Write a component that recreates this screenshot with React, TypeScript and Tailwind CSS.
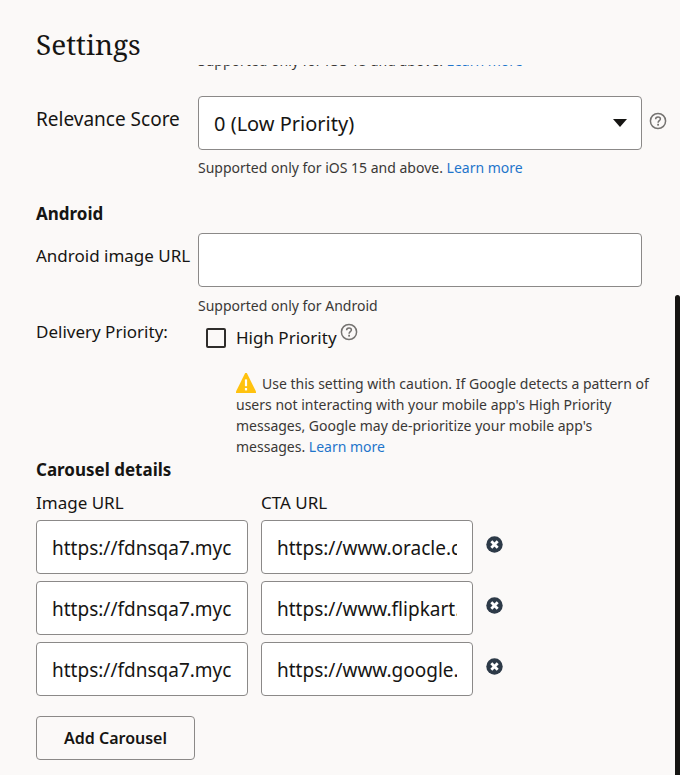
import React, { useState } from 'react';

interface CarouselItem {
  id: number;
  image: string;
  cta: string;
}

const initialItems: CarouselItem[] = [
  { id: 1, image: 'https://fdnsqa7.mycdn.com/images/1.png', cta: 'https://www.oracle.com' },
  { id: 2, image: 'https://fdnsqa7.mycdn.com/images/2.png', cta: 'https://www.flipkart.com' },
  { id: 3, image: 'https://fdnsqa7.mycdn.com/images/3.png', cta: 'https://www.google.com' },
];

const fieldClass = 'block w-full h-[54px] px-[15px] pt-[1px] bg-white border border-[#8b8988] rounded-[4px] text-[#161513] outline-none focus:border-[#227e9e]';
const hintClass = 'text-[14px] leading-[21px] text-[#3a3836]';
const linkClass = 'text-[#1f75cb] hover:underline';

const HelpIcon = () => (
  <svg width="18" height="18" viewBox="0 0 18 18" fill="none" aria-hidden="true">
    <circle cx="9" cy="9" r="7.6" stroke="#757371" strokeWidth="1.5" />
    <path d="M6.6 7.3C6.6 5.8 7.6 4.9 9 4.9s2.4.9 2.4 2.1c0 1.6-2.3 1.8-2.3 3.7" stroke="#757371" strokeWidth="1.5" />
    <rect x="8.2" y="11.8" width="1.8" height="1.8" fill="#757371" />
  </svg>
);

const WarningIcon = () => (
  <svg width="20" height="20" viewBox="0 0 20 20" className="inline-block mr-[6px] align-text-bottom" aria-hidden="true">
    <path d="M9.2 0h1.6L20 18.5V20H0v-1.5Z" fill="#ffc20e" />
    <path d="M10 6.4v6.8" stroke="#fff" strokeWidth="2.2" />
    <path d="M10 15v2.4" stroke="#fff" strokeWidth="2.2" />
  </svg>
);

const RemoveIcon = () => (
  <svg width="17" height="17" viewBox="0 0 17 17" aria-hidden="true">
    <circle cx="8.5" cy="8.5" r="8.2" fill="#2d3a48" />
    <path d="m5.3 5.3 6.4 6.4m0-6.4-6.4 6.4" stroke="#fff" strokeWidth="2.8" />
  </svg>
);

const App: React.FC = () => {
  const [score, setScore] = useState('0');
  const [androidImage, setAndroidImage] = useState('');
  const [highPriority, setHighPriority] = useState(false);
  const [items, setItems] = useState<CarouselItem[]>(initialItems);

  const updateItem = (id: number, patch: Partial<CarouselItem>) => {
    setItems(items.map(item => (item.id === id ? { ...item, ...patch } : item)));
  };

  const addItem = () => {
    setItems([...items, { id: Date.now(), image: '', cta: '' }]);
  };

  return (
    <div className="flex min-h-screen bg-[#fbf9f8] text-[#161513] font-['Noto_Sans','Open_Sans',sans-serif]">
      <main className="flex-1 min-w-0 pl-9 pr-2 pb-[15px]">
        <h1 className="pt-6 pb-[1px] text-[28px] leading-10 font-['Noto_Serif','Liberation_Serif',serif]">Settings</h1>

        {/* row scrolled under the heading */}
        <div className="flex items-end h-[6px] ml-[162px] overflow-hidden">
          <p className={hintClass}>
            Supported only for iOS 15 and above. <a href="#" className={linkClass}>Learn more</a>
          </p>
        </div>

        <div className="grid grid-cols-[162px_1fr_25px] mt-[25px]">
          <label htmlFor="score" className="pt-2 text-[19px] leading-[30px]">Relevance Score</label>
          <div className="relative">
            <select
              id="score"
              value={score}
              onChange={e => setScore(e.target.value)}
              className={`${fieldClass} text-[20px] appearance-none`}
            >
              <option value="0">0 (Low Priority)</option>
              <option value="0.5">0.5 (Medium Priority)</option>
              <option value="1">1 (High Priority)</option>
            </select>
            <svg width="14" height="8" viewBox="0 0 14 8" className="absolute right-[15px] top-[23px] pointer-events-none" aria-hidden="true">
              <path d="M0 0h14L7 8Z" fill="#161513" />
            </svg>
          </div>
          <button type="button" aria-label="Relevance score help" className="self-start mt-4 ml-[7px]">
            <HelpIcon />
          </button>
          <p className={`${hintClass} col-start-2 mt-[7px]`}>
            Supported only for iOS 15 and above. <a href="#" className={linkClass}>Learn more</a>
          </p>
        </div>

        <h2 className="mt-6 text-[17px] leading-6 font-bold">Android</h2>

        <div className="grid grid-cols-[162px_1fr_25px] mt-[7px]">
          <label htmlFor="android-image" className="pt-2 text-[17px] leading-[30px]">Android image URL</label>
          <input
            id="android-image"
            type="text"
            value={androidImage}
            onChange={e => setAndroidImage(e.target.value)}
            className={`${fieldClass} text-[19px]`}
          />
          <p className={`${hintClass} col-start-2 mt-2`}>Supported only for Android</p>
        </div>

        <div className="flex mt-1">
          <span className="w-[162px] shrink-0 text-[17px] leading-6">Delivery Priority:</span>
          <div className="flex-1 min-w-0 pl-2">
            <div className="flex items-start">
              <label className="flex items-center gap-[10px] mt-2 text-[17px] leading-5">
                <input
                  type="checkbox"
                  checked={highPriority}
                  onChange={e => setHighPriority(e.target.checked)}
                  className="appearance-none w-5 h-5 border-2 border-[#2f2d2b] rounded-[2px] checked:bg-[#2f2d2b]"
                />
                High Priority
              </label>
              <button type="button" aria-label="High priority help" className="mt-[3px] ml-[3px]">
                <HelpIcon />
              </button>
            </div>
            <p className={`${hintClass} mt-[25px] pl-[30px] pr-1`}>
              <WarningIcon />
              Use this setting with caution. If Google detects a pattern of users not interacting with your mobile app's High Priority messages, Google may de-prioritize your mobile app's messages. <a href="#" className={linkClass}>Learn more</a>
            </p>
          </div>
        </div>

        <h2 className="mt-[1px] text-[17px] leading-6 font-bold">Carousel details</h2>

        <div className="grid grid-cols-[212px_212px_auto] gap-x-[13px] gap-y-[7px] justify-start mt-[11px]">
          <label htmlFor="image-1" className="text-[17px] leading-5">Image URL</label>
          <label htmlFor="cta-1" className="col-span-2 text-[17px] leading-5">CTA URL</label>
          {items.map((item, i) => (
            <React.Fragment key={item.id}>
              <input
                id={`image-${i + 1}`}
                type="text"
                aria-label={`Image URL ${i + 1}`}
                value={item.image}
                onChange={e => updateItem(item.id, { image: e.target.value })}
                className={`${fieldClass} text-[19px]`}
              />
              <input
                id={`cta-${i + 1}`}
                type="text"
                aria-label={`CTA URL ${i + 1}`}
                value={item.cta}
                onChange={e => updateItem(item.id, { cta: e.target.value })}
                className={`${fieldClass} text-[19px]`}
              />
              <button
                type="button"
                aria-label={`Remove carousel ${i + 1}`}
                onClick={() => setItems(items.filter(other => other.id !== item.id))}
                className="self-start mt-4"
              >
                <RemoveIcon />
              </button>
            </React.Fragment>
          ))}
        </div>

        <button
          type="button"
          onClick={addItem}
          className="h-11 mt-5 px-[27px] border border-[#8b8988] rounded-[4px] text-[16px] font-semibold"
        >
          Add Carousel
        </button>
      </main>

      {/* scrollbar */}
      <div className="flex flex-col w-[5px] shrink-0">
        <div className="basis-[38%]" />
        <div className="flex-1 bg-[#161513] rounded-t-[3px]" />
      </div>
    </div>
  );
};

export default App;
